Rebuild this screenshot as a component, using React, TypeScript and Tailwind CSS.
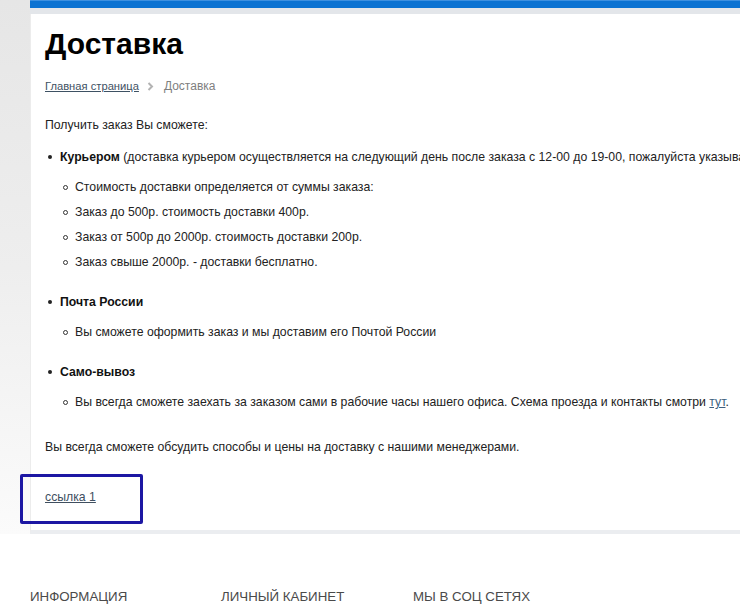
import React from 'react';

const font = { fontFamily: '"Liberation Sans", Arial, sans-serif' };

function Disc() {
  return <span className="mr-[8px] ml-[3px] inline-block h-[4px] w-[4px] shrink-0 rounded-full bg-[#222]" />;
}

function Circle() {
  return <span className="mr-[7px] ml-[3px] inline-block h-[5px] w-[5px] shrink-0 rounded-full border border-[#333]" />;
}

function Item({ children, bold = false }: { children: React.ReactNode; bold?: boolean }) {
  return (
    <li className={`flex h-4 items-center ${bold ? 'font-bold text-[#111]' : ''}`}>
      <Disc />
      <span>{children}</span>
    </li>
  );
}

function SubList({ items }: { items: React.ReactNode[] }) {
  return (
    <ul className="mt-[14px] flex flex-col gap-[9px] pl-[15px]">
      {items.map((it, i) => (
        <li key={i} className="flex h-4 items-center">
          <Circle />
          <span>{it}</span>
        </li>
      ))}
    </ul>
  );
}

export default function App() {
  return (
    <div className="h-[612px] w-[740px] overflow-hidden bg-white text-[12.25px] leading-4 text-[#222]" style={font}>
      <div className="flex">
        {/* left page shadow */}
        <div className="w-[30px] shrink-0 bg-gradient-to-b from-[#e6e6e6] via-[#eeeeee] to-[#fbfbfb]" />

        <div className="min-w-0 flex-1">
          <div className="h-[8px] border-t border-[#3d90e0] bg-[#0b72d2]" />
          <div className="h-[6px] bg-[#e3e6ea]" />

          <div className="border-b-4 border-l border-[#ebedf0] border-l-[#ececec] pb-[6px] pl-[14px] whitespace-nowrap">
            <h1 className="pt-[12px] text-[30px] leading-9 font-bold text-black">Доставка</h1>

            <div className="mt-[16px] flex h-4 items-center">
              <a href="#" className="text-[11.2px] text-[#3e5163] underline">Главная страница</a>
              <svg width="7" height="9" viewBox="0 0 7 9" className="mr-[10px] ml-[8px]">
                <polyline points="1.5,1 5,4.5 1.5,8" fill="none" stroke="#b3b3b3" strokeWidth="2" />
              </svg>
              <span className="text-[12px] text-[#808080]">Доставка</span>
            </div>

            <p className="mt-[23px]">Получить заказ Вы сможете:</p>

            <ul className="mt-[16px]">
              <li>
                <div className="flex h-4 items-center">
                  <Disc />
                  <span>
                    <b className="text-[#111]">Курьером</b> (доставка курьером осуществляется на следующий день после заказа с 12-00 до 19-00, пожалуйста указывайте точный адрес доставки)
                  </span>
                </div>
                <SubList
                  items={[
                    'Стоимость доставки определяется от суммы заказа:',
                    'Заказ до 500р. стоимость доставки 400р.',
                    'Заказ от 500р до 2000р. стоимость доставки 200р.',
                    'Заказ свыше 2000р. - доставки бесплатно.',
                  ]}
                />
              </li>
            </ul>

            <ul className="mt-[24px]">
              <Item bold>Почта России</Item>
              <SubList items={['Вы сможете оформить заказ и мы доставим его Почтой России']} />
            </ul>

            <ul className="mt-[24px]">
              <Item bold>Само-вывоз</Item>
              <SubList
                items={[
                  <>
                    Вы всегда сможете заехать за заказом сами в рабочие часы нашего офиса. Схема проезда и контакты смотри{' '}
                    <a href="#" className="text-[#3d5f80] underline">тут</a>.
                  </>,
                ]}
              />
            </ul>

            <p className="mt-[29px]">Вы всегда сможете обсудить способы и цены на доставку с нашими менеджерами.</p>

            <div className="mt-[19px] -ml-[25px] w-[123px] rounded-[2px] border-[3px] border-[#1c17a3] pt-[12px] pb-[16px] pl-[22px]">
              <a href="#" className="text-[#404f5f] underline">ссылка 1</a>
            </div>
          </div>
        </div>
      </div>

      <footer className="mt-[53px] flex pl-[30px] text-[13.3px] leading-5 text-[#4a4a4a]">
        <div className="w-[191px]">ИНФОРМАЦИЯ</div>
        <div className="w-[192px]">ЛИЧНЫЙ КАБИНЕТ</div>
        <div>МЫ В СОЦ СЕТЯХ</div>
      </footer>
    </div>
  );
}
